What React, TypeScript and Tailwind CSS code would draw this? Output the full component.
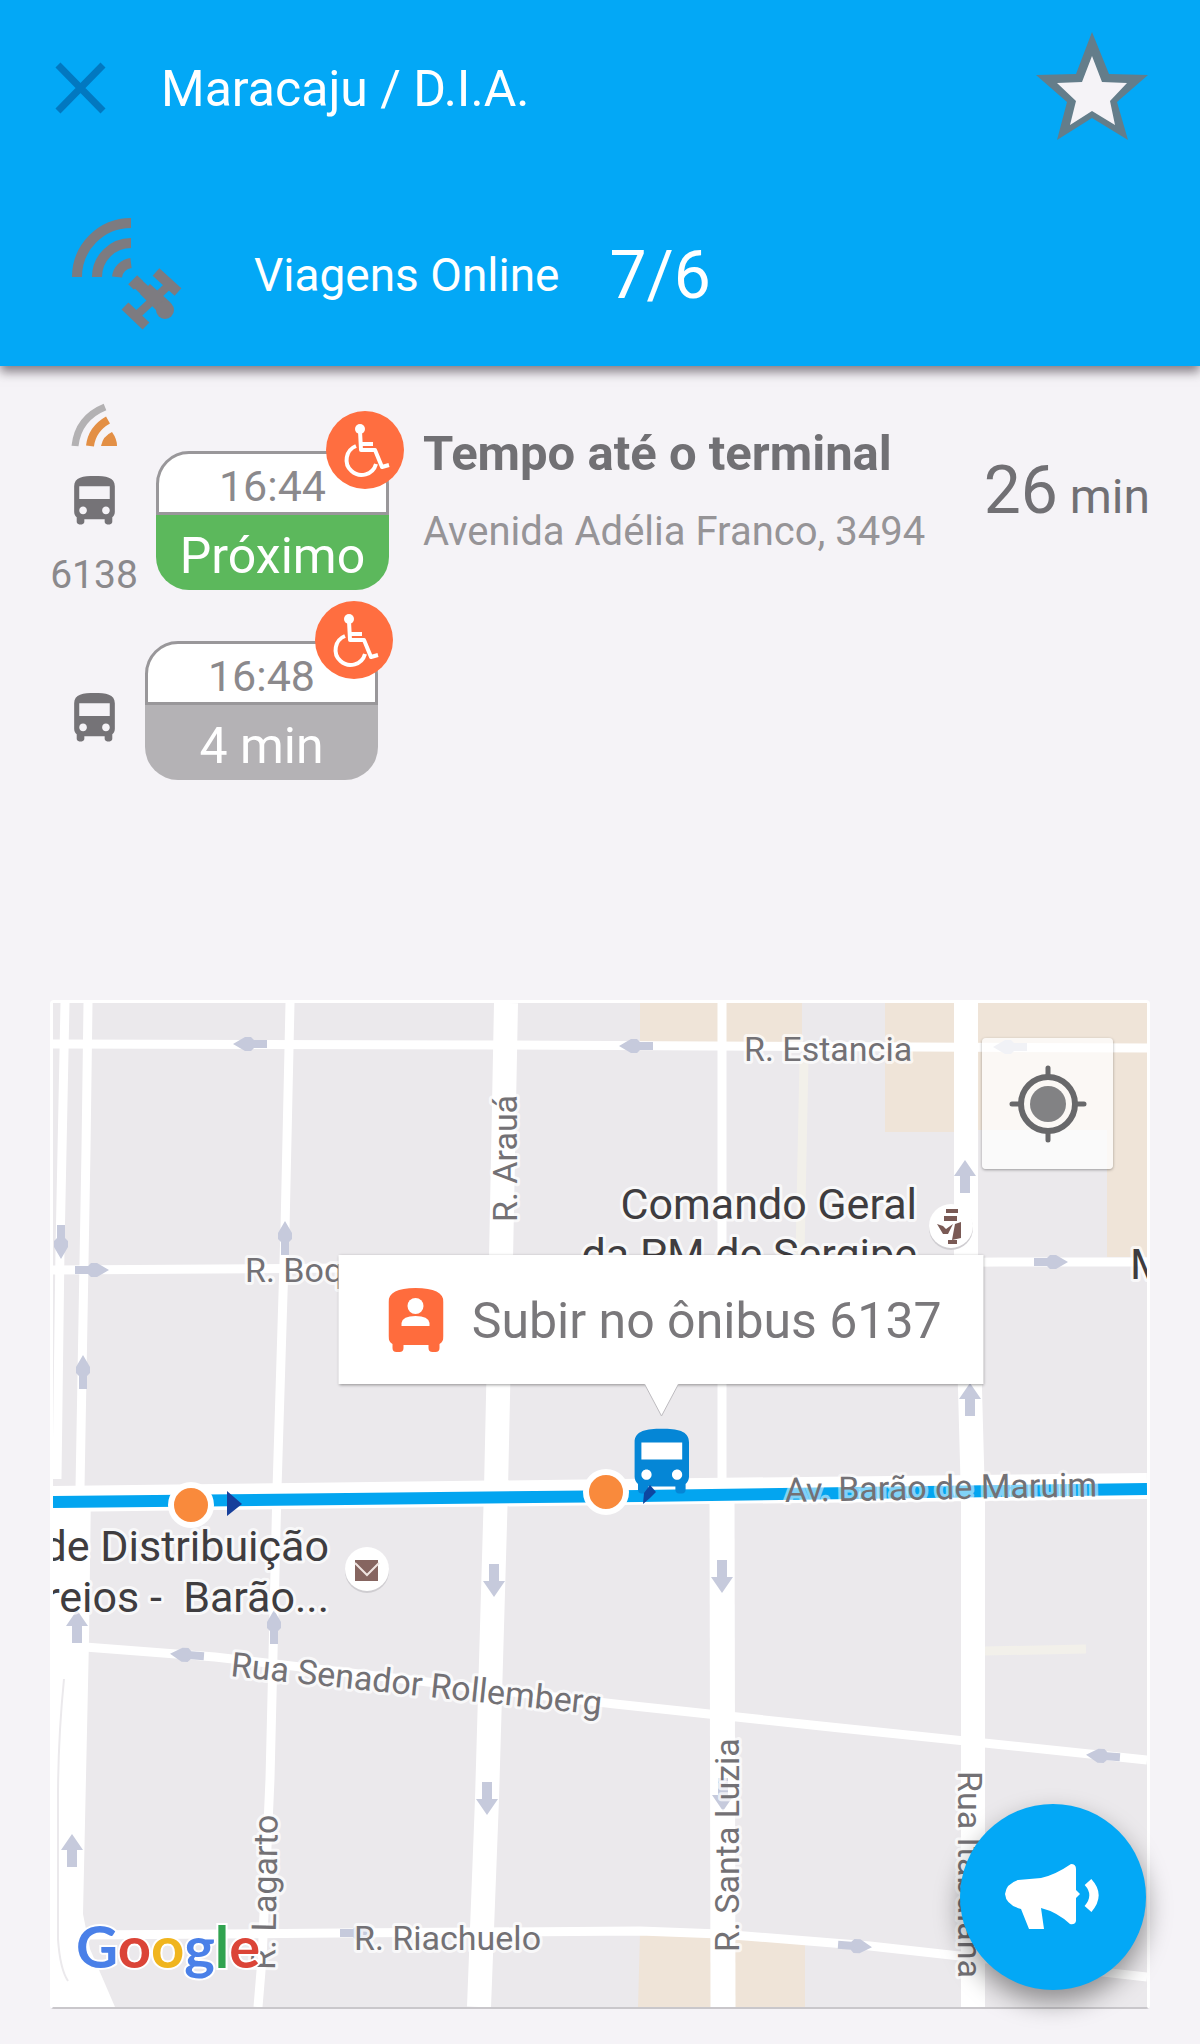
import type { ReactNode } from 'react';

const stops = [
  { x: 191, y: 1506 },
  { x: 606, y: 1493 },
];

// wide: arrow head size on avenues, the small streets clip it
const arrows = [
  { x: 250, y: 1045, angle: -90, wide: false },
  { x: 636, y: 1047, angle: -90, wide: false },
  { x: 1010, y: 1048, angle: -90, wide: false },
  { x: 187, y: 1656, angle: -86, wide: false },
  { x: 1103, y: 1757, angle: -86, wide: false },
  { x: 92, y: 1271, angle: 90, wide: false },
  { x: 1051, y: 1263, angle: 90, wide: false },
  { x: 357, y: 1934, angle: 90, wide: false },
  { x: 855, y: 1947, angle: 94, wide: false },
  { x: 61, y: 1243, angle: 180, wide: false },
  { x: 285, y: 1239, angle: 0, wide: false },
  { x: 83, y: 1373, angle: 0, wide: false },
  { x: 274, y: 1628, angle: 0, wide: false },
  { x: 494, y: 1581, angle: 180, wide: true },
  { x: 722, y: 1577, angle: 180, wide: true },
  { x: 487, y: 1799, angle: 180, wide: true },
  { x: 723, y: 1795, angle: 180, wide: true },
  { x: 965, y: 1178, angle: 0, wide: true },
  { x: 970, y: 1401, angle: 0, wide: true },
  { x: 77, y: 1628, angle: 0, wide: true },
  { x: 72, y: 1852, angle: 0, wide: true },
];

const streets = [
  { name: 'R. Estancia', x: 744, y: 1062, angle: 0 },
  { name: 'R. Arauá', x: 517, y: 1223, angle: -90 },
  { name: 'R. Boquim', x: 245, y: 1283, angle: 0 },
  { name: 'Rua Senador Rollemberg', x: 230, y: 1677, angle: 6 },
  { name: 'R. Lagarto', x: 275, y: 1971, angle: -89 },
  { name: 'R. Santa Luzia', x: 739, y: 1953, angle: -90 },
  { name: 'R. Riachuelo', x: 354, y: 1951, angle: 0 },
  { name: 'Rua Itabaiana', x: 958, y: 1772, angle: 90 },
];

const busPath =
  'M4 16c0 .88.39 1.67 1 2.22V20c0 .55.45 1 1 1h1c.55 0 1-.45 1-1v-1h8v1c0 .55.45 1 1 1h1c.55 0 1-.45 1-1v-1.78c.61-.55 1-1.34 1-2.22V6c0-3.5-3.58-4-8-4s-8 .5-8 4v10zm3.5 1c-.83 0-1.5-.67-1.5-1.5S6.67 14 7.5 14s1.5.67 1.5 1.5S8.33 17 7.5 17zm9 0c-.83 0-1.5-.67-1.5-1.5s.67-1.5 1.5-1.5 1.5.67 1.5 1.5-.67 1.5-1.5 1.5zm1.5-6H6V6h12v5z';

function BusIcon() {
  return (
    <svg viewBox="0 0 24 24" className="size-[61px] fill-[#757377]" aria-hidden="true">
      <path d={busPath} />
    </svg>
  );
}

function SatelliteIcon() {
  return (
    <svg viewBox="0 0 112 112" className="size-28 shrink-0" fill="none" stroke="#7d7b80" aria-hidden="true">
      <g strokeWidth="10">
        <path d="M5 59A54 54 0 0 1 59 5" />
        <path d="M25 59A34 34 0 0 1 59 25" />
        <path d="M45 59A16 16 0 0 1 59 45" />
      </g>
      <path d="M59 69l9-9" strokeWidth="8" />
      <path d="M66 66l28 26" strokeWidth="11" />
      <path d="M97 67L66 96" strokeWidth="8" />
      <path d="M84 54l22 20M53 88l21 20" strokeWidth="10" />
      <path d="M68 76l10-10 20 18a8 8 0 0 1-10 12z" fill="#7d7b80" stroke="none" />
      <circle cx="93" cy="92" r="9" fill="#7d7b80" stroke="none" />
    </svg>
  );
}

function SignalIcon() {
  return (
    <svg viewBox="0 0 46 46" className="size-[46px]" fill="none" aria-hidden="true">
      <path d="M4 44Q7 16 34 5" stroke="#b3b1b3" strokeWidth="7" />
      <path d="M19 44Q21 27 37 18" stroke="#e38f45" strokeWidth="8" />
      <path d="M30 44Q32 34 41 30Q46 37 46 44Z" fill="#e38f45" />
    </svg>
  );
}

function WheelchairBadge() {
  return (
    <svg viewBox="0 0 78 78" className="absolute -top-10 -right-[15px] size-[78px]" role="img" aria-label="Acessível">
      <circle cx="39" cy="39" r="39" fill="#ff6e40" />
      <circle cx="34" cy="18" r="5" fill="#fff" />
      <g fill="none" stroke="#fff" strokeWidth="4" strokeLinejoin="round">
        <path d="M34 20L35 39H49L56 56L63 54" />
        <path d="M35 33H47" />
        <path d="M30 35A15 15 0 1 0 50 53" />
      </g>
    </svg>
  );
}

function TripBadge({ time, status, next }: { time: string; status: string; next?: boolean }) {
  return (
    <div className="relative w-[233px] shrink-0 text-center">
      <div className="h-16 rounded-t-[33px] border-3 border-[#99979a] bg-white pt-1 text-[43px] leading-[56px] text-[#8b898c]">
        {time}
      </div>
      <div className={`h-[75px] rounded-b-[33px] text-[50px] leading-[82px] text-white ${next ? 'bg-[#5cb85c]' : 'bg-[#b4b2b5]'}`}>
        {status}
      </div>
      <WheelchairBadge />
    </div>
  );
}

function Road({ d, width = 9, color = '#fff' }: { d: string; width?: number; color?: string }) {
  return <path d={d} fill="none" stroke={color} strokeWidth={width} />;
}

function Halo({ children }: { children: ReactNode }) {
  return (
    <g stroke="#fff" strokeOpacity="0.7" strokeWidth="6" strokeLinejoin="round" style={{ paintOrder: 'stroke' }}>
      {children}
    </g>
  );
}

function CityMap() {
  return (
    <svg viewBox="53 1004 1094 1004" className="block w-full" role="img" aria-label="Mapa da linha">
      <rect x="53" y="1004" width="1094" height="1004" fill="#ebe9ec" />
      <g fill="#efe4d8">
        <path d="M640 1004H802V1046H640ZM885 1004H1147V1258H1107V1133H885Z" />
        <path d="M640 1934L805 1944V2008H638Z" />
      </g>
      <path d="M954 1131H1107V1258H954Z" fill="#ebe9ec" />
      <Road d="M804 1060L800 1256" color="#f2f0ea" />
      <Road d="M985 1652L1086 1650" color="#f2f0ea" />

      <Road d="M53 1045L500 1046L1147 1049" />
      <Road d="M53 1271L350 1269L1000 1263H1147" />
      <Road d="M85 1648L215 1658L615 1705L840 1729L1147 1761" />
      <Road d="M80 1936L340 1934L640 1932L720 1935L870 1947L1147 1978" />
      <Road d="M65 1004L60 1250L57 1480" />
      <Road d="M88 1004L86 1150L80 1490" />
      <Road d="M290 1004L285 1230L277 1490L270 1780L262 1960L258 2008" />
      <Road d="M506 1004L501 1260L496 1490L487 1800L479 2008" width={24} />
      <Road d="M722 1004V1490" />
      <Road d="M722 1490L723 2008" width={25} />
      <Road d="M966 1004V1280L970 1390L973 1500V2008" width={24} />
      <path d="M53 1490H91L89 1640L83 1915L90 1950L115 2008H53Z" fill="#fff" />
      <path d="M64 1680Q58 1740 58 1800V1940Q60 1970 68 1982" fill="none" stroke="#ebe9ec" strokeWidth="2" />

      <g fill="#c6cadc">
        {arrows.map((a) => (
          <path
            key={`${a.x}-${a.y}`}
            transform={`translate(${a.x} ${a.y}) rotate(${a.angle})`}
            d={a.wide ? 'M0-17L11-1H5V16H-5V-1H-11Z' : 'M0-17L7-5V1L4 4V17H-4V4L-7 1V-5Z'}
          />
        ))}
      </g>

      <Road d="M53 1500L620 1493L1147 1487" width={26} />
      <Road d="M53 1503L440 1499L640 1497L1147 1490" width={12} color="#03a5f0" />

      <g fontFamily="Roboto, sans-serif">
        <Halo>
          <g fontSize="34" fill="#737175">
            {streets.map((s) => (
              <text key={s.name} transform={`translate(${s.x} ${s.y}) rotate(${s.angle})`}>
                {s.name}
              </text>
            ))}
            <text transform="translate(785 1503) rotate(-1)" strokeOpacity="0.5">Av. Barão de Maruim</text>
          </g>
          <g fontSize="43" fill="#3f3d40" textAnchor="end">
            <text x="917" y="1220">Comando Geral</text>
            <text x="917" y="1270">da PM de Sergipe</text>
            <text x="329" y="1562">de Distribuição</text>
            <text x="329" y="1613">reios - &nbsp;Barão...</text>
            <text x="1130" y="1280" textAnchor="start">M</text>
          </g>
        </Halo>
      </g>

      <circle cx="951" cy="1229" r="22" fill="#cfcdd1" />
      <circle cx="951" cy="1227" r="22" fill="#fff" />
      <path d="M946 1210h12v4h-12zM944 1217h13v5h-13zM937 1225l6 2 3 3 7-5-5 10h-5zM955 1225l6-2v16l-9 2zM948 1241h9v4h-9z" fill="#7a5a55" />
      <circle cx="367" cy="1572" r="22" fill="#cfcdd1" />
      <circle cx="367" cy="1570" r="22" fill="#fff" />
      <path d="M355 1561h23v21h-23z" fill="#866560" />
      <path d="M355 1564l12 12 12-12" fill="none" stroke="#efe4e0" strokeWidth="2" />

      {stops.map((s) => (
        <circle key={s.x} cx={s.x} cy={s.y} r="20" fill="#f98a3c" stroke="#fff" strokeWidth="6" />
      ))}
      <path d="M227 1492l15 13-15 12z" fill="#173f9b" />
      <g transform="translate(621 1423) scale(3.4)">
        <path d="M5 5h14v13H5z" fill="#fff" />
        <path d={busPath} fill="#0586d6" />
      </g>
      <path d="M643 1505l1-11 6-8 6 7-6 6z" fill="#0d47a1" />

      <text x="76" y="1969" fontFamily="Lato, sans-serif" fontSize="58" fontWeight="700" stroke="#fff" strokeWidth="4" style={{ paintOrder: 'stroke' }}>
        <tspan fill="#4a80e8">G</tspan>
        <tspan fill="#db4437">o</tspan>
        <tspan fill="#f0b51e">o</tspan>
        <tspan fill="#4a80e8">g</tspan>
        <tspan fill="#31a350">l</tspan>
        <tspan fill="#db4437">e</tspan>
      </text>
    </svg>
  );
}

export default function App() {
  return (
    <div className="min-h-screen bg-[#f5f3f7] font-[Roboto,sans-serif]">
      <header className="bg-[#03a8f6] pt-8 pr-[52px] pb-9 pl-[50px] text-white shadow-[0_6px_10px_rgba(60,50,60,0.6)]">
        <div className="flex h-28 items-center">
          <button type="button" aria-label="Fechar" className="mr-[51px]">
            <svg viewBox="0 0 60 60" className="size-[60px]" fill="none" stroke="#0278c0" strokeWidth="7" aria-hidden="true">
              <path d="M8 7L53 53M53 7L8 53" />
            </svg>
          </button>
          <h1 className="pt-0.5 text-[50px]">Maracaju / D.I.A.</h1>
          <button type="button" aria-label="Favorito" className="ml-auto">
            <svg viewBox="0 0 112 112" className="size-28" aria-hidden="true">
              <path d="M56 0L73 42L112 43L81 70L92 108L56 86L21 108L31 70L0 43L40 42Z" fill="#647d8a" />
              <path d="M56 24L66 50L91 51L74 69L79 93L56 79L34 93L40 69L21 51L46 50Z" fill="#f5f3f7" />
            </svg>
          </button>
        </div>
        <div className="mt-[74px] flex items-center pl-[22px]">
          <SatelliteIcon />
          <p className="ml-[70px] pt-0.5 text-[46px]">Viagens Online</p>
          <p className="ml-[50px] pt-1 text-[66px] leading-none">7/6</p>
        </div>
      </header>

      <main className="px-[50px] pt-[34px] pb-9">
        <ul className="flex flex-col gap-[47px]">
          <li className="flex items-start">
            <div className="flex w-[88px] shrink-0 flex-col items-center pt-0.5">
              <SignalIcon />
              <div className="mt-[23px]"><BusIcon /></div>
              <span className="mt-6 text-[39px] leading-[38px] text-[#8b898c]">6138</span>
            </div>
            <div className="mt-[51px] ml-[18px]">
              <TripBadge time="16:44" status="Próximo" next />
            </div>
            <div className="mt-6 ml-[34px] flex-1">
              <h2 className="text-[49px] leading-[60px] font-bold text-[#717074]">Tempo até o terminal</h2>
              <p className="mt-6 text-[40px] leading-[48px] text-[#969497]">Avenida Adélia Franco, 3494</p>
            </div>
            <p className="mt-[58px] text-5xl text-[#717074]">
              <span className="text-[66px]">26</span> min
            </p>
          </li>
          <li className="flex items-start">
            <div className="mt-[47px] flex w-[88px] shrink-0 justify-center">
              <BusIcon />
            </div>
            <div className="ml-[7px]">
              <TripBadge time="16:48" status="4 min" />
            </div>
          </li>
        </ul>

        <section className="relative mt-[220px] rounded-sm border-3 border-b-2 border-white border-b-[#c9c7cb]">
          <CityMap />

          <button
            type="button"
            aria-label="Minha localização"
            className="absolute top-[35px] right-[34px] flex size-[131px] items-center justify-center rounded-sm bg-white/75 shadow-[0_1px_3px_rgba(0,0,0,0.35)]"
          >
            <svg viewBox="0 0 80 80" className="size-20" fill="none" stroke="#68686a" strokeWidth="5" aria-hidden="true">
              <circle cx="40" cy="40" r="27" strokeWidth="6" />
              <path d="M40 4V12M40 68V76M4 40H12M68 40H76" strokeLinecap="round" />
              <circle cx="40" cy="40" r="18" fill="#828284" stroke="none" />
            </svg>
          </button>

          {/* marker info window */}
          <div className="absolute top-[25.1%] left-[55.6%] flex h-[129px] w-[645px] -translate-x-1/2 items-center bg-white pl-[50px] shadow-[0_1px_3px_rgba(0,0,0,0.4)]">
            <svg viewBox="0 0 55 64" className="h-16 w-[55px]" aria-hidden="true">
              <path d="M0 14Q0 0 27 0Q55 0 55 14V48Q55 54 51 56V60Q51 64 47 64H44Q40 64 40 60V57H15V60Q15 64 11 64H8Q4 64 4 60V56Q0 54 0 48Z" fill="#ff6c3d" />
              <circle cx="27" cy="18" r="8" fill="#fff" />
              <path d="M13 38V35Q14 28 27 28Q40 28 41 35V38Z" fill="#fff" />
            </svg>
            <span className="ml-7 pt-1 text-[50px] whitespace-nowrap text-[#7a787b]">Subir no ônibus 6137</span>
            <svg viewBox="0 0 34 32" className="absolute top-full left-1/2 h-8 w-[34px] -translate-x-1/2" aria-hidden="true">
              <path d="M0 0L17 32L34 0Z" fill="#fff" />
              <path d="M0 0L17 32L34 0" fill="none" stroke="#bdbbbf" />
            </svg>
          </div>

          <button
            type="button"
            aria-label="Avisar"
            className="absolute right-px bottom-[17px] flex size-[186px] items-center justify-center rounded-full bg-[#03a8f6] shadow-[0_12px_26px_rgba(0,0,0,0.4)]"
          >
            <svg viewBox="0 0 96 66" className="h-[66px] w-24" aria-hidden="true">
              <path d="M0 30Q1 20 13 16L36 14Q50 11 66 0Q71 0 71 5V26L75 30L71 34V57Q70 61 65 60Q52 48 36 44L39 65H24L16 45Q1 41 0 30Z" fill="#fff" />
              <path d="M83 18Q95 31 83 45" fill="none" stroke="#fff" strokeWidth="9" />
            </svg>
          </button>
        </section>
      </main>
    </div>
  );
}
